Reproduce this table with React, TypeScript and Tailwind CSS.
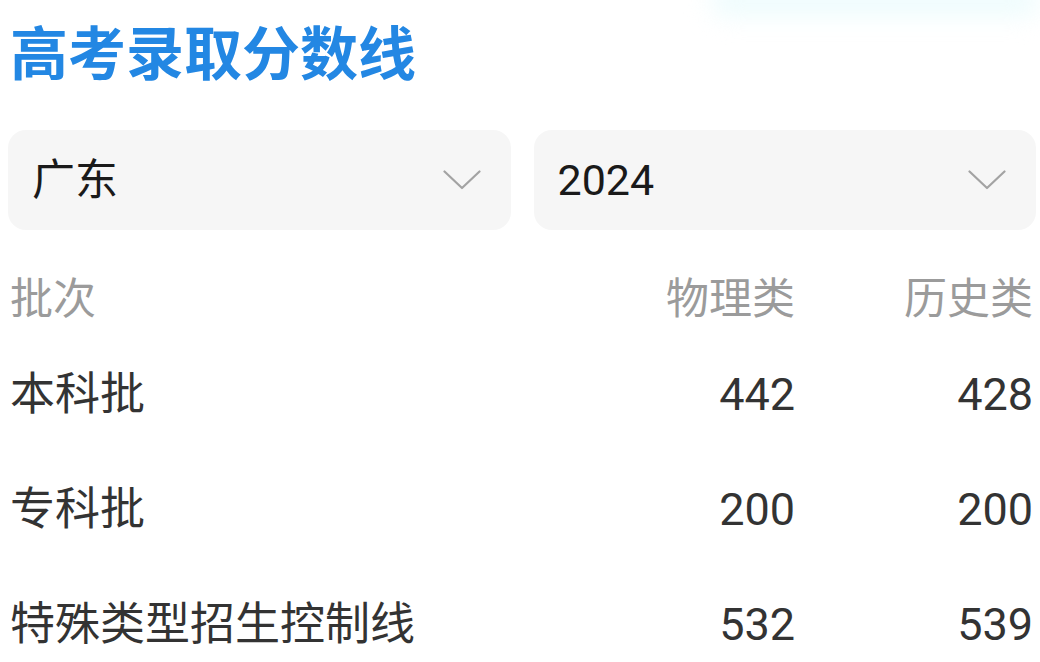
const rows = [
  { name: "本科批", physics: "442", history: "428" },
  { name: "专科批", physics: "200", history: "200" },
  { name: "特殊类型招生控制线", physics: "532", history: "539" },
];

const Chevron = () => (
  <svg width="38" height="20" viewBox="0 0 38 20" fill="none" className="text-[#a3a3a3]">
    <polyline points="1.5,1.5 19,18 36.5,1.5" stroke="currentColor" strokeWidth="2.2" strokeLinecap="round" strokeLinejoin="round" />
  </svg>
);

const Select = ({ value }: { value: string }) => (
  <div className="flex-1 h-[100px] rounded-[18px] bg-[#f6f6f6] flex items-center justify-between pl-[24px] pr-[30px]">
    <span className="text-[43px] leading-none text-[#1a1a1a]">{value}</span>
    <Chevron />
  </div>
);

export default function App() {
  return (
    <div
      className="relative h-screen overflow-hidden bg-white pl-2 pr-1"
      style={{ fontFamily: 'Roboto, "Noto Sans CJK SC", sans-serif' }}
    >
      {/* faint glow at the top edge */}
      <div className="absolute right-0 top-[-14px] h-[30px] w-[330px] rounded-full bg-[#eefcfd] blur-md" />

      <h1 className="relative pt-[26px] pl-[2px] h-[83px] text-[58px] leading-none font-bold text-[#2387e3]">
        高考录取分数线
      </h1>

      <div className="mt-[47px] flex gap-[23px]">
        <Select value="广东" />
        <Select value="2024" />
      </div>

      <div className="mt-[32px] pr-[3px] pl-[2px]">
        <div className="grid grid-cols-[1fr_200px_238px] h-[75px] items-center text-[43px] leading-none text-[#9b9b9b]">
          <span>批次</span>
          <span className="text-right">物理类</span>
          <span className="text-right">历史类</span>
        </div>
        {rows.map((r) => (
          <div
            key={r.name}
            className="grid grid-cols-[1fr_200px_238px] h-[115px] items-center text-[45px] leading-none text-[#333333]"
          >
            <span>{r.name}</span>
            <span className="text-right">{r.physics}</span>
            <span className="text-right">{r.history}</span>
          </div>
        ))}
      </div>
    </div>
  );
}
